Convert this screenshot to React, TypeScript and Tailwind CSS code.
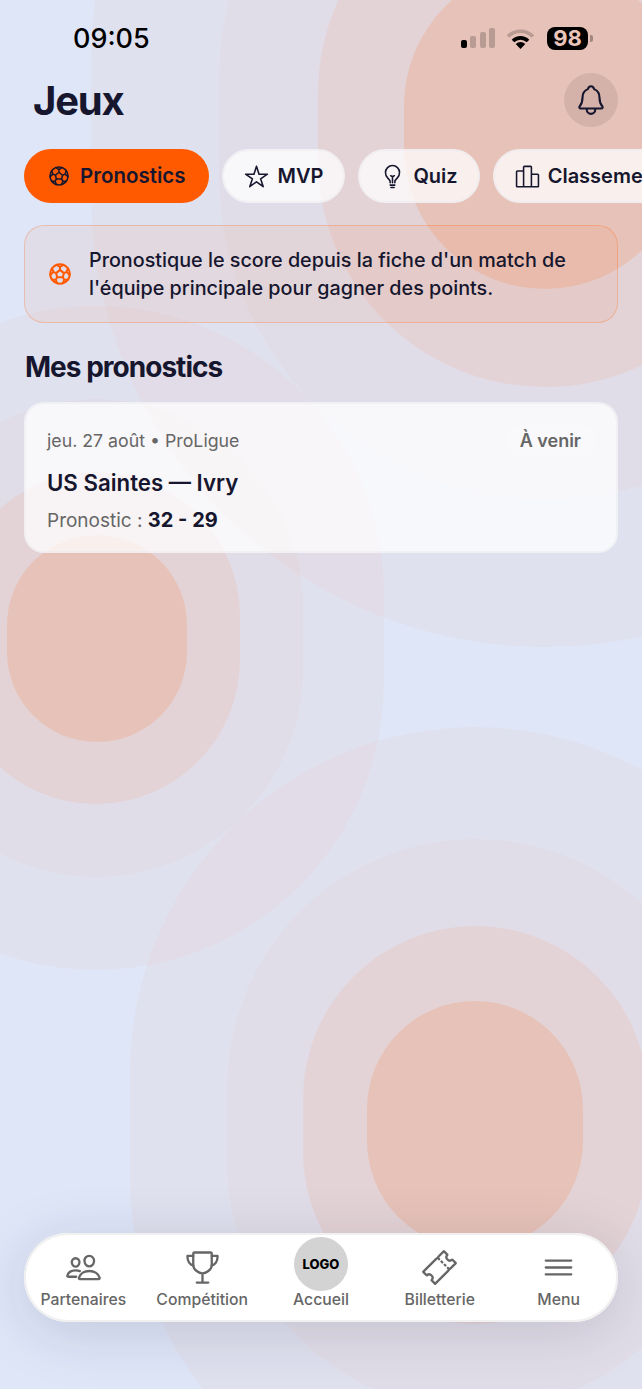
import {
  IoBulbOutline,
  IoFootballOutline,
  IoMenuOutline,
  IoNotificationsOutline,
  IoPeopleOutline,
  IoPodiumOutline,
  IoStarOutline,
  IoTicketOutline,
  IoTrophyOutline,
} from 'react-icons/io5';

// nested translucent pills behind the page
const SHAPES = [
  // top right
  'left-[91px] top-[-393px] h-[1040px] w-[908px] bg-[#ff5a00]/[0.035]',
  'left-[219px] top-[-247px] h-[747px] w-[652px] bg-[#ff5a00]/[0.03]',
  'left-[318px] top-[-133px] h-[520px] w-[454px] bg-[#ff5a00]/[0.08]',
  'left-[404px] top-[-35px] h-[324px] w-[282px] bg-[#ff5a00]/[0.14]',
  // left
  'left-[-192px] top-[306px] h-[664px] w-[576px] bg-[#ff5a00]/[0.035]',
  'left-[-111px] top-[399px] h-[478px] w-[414px] bg-[#ff5a00]/[0.03]',
  'left-[-48px] top-[472px] h-[332px] w-[288px] bg-[#ff5a00]/[0.08]',
  'left-[7px] top-[535px] h-[207px] w-[180px] bg-[#ff5a00]/[0.14]',
  // bottom right
  'left-[130px] top-[727px] h-[795px] w-[690px] bg-[#ff5a00]/[0.035]',
  'left-[227px] top-[839px] h-[572px] w-[497px] bg-[#ff5a00]/[0.03]',
  'left-[303px] top-[926px] h-[398px] w-[345px] bg-[#ff5a00]/[0.08]',
  'left-[367px] top-[1001px] h-[248px] w-[216px] bg-[#ff5a00]/[0.14]',
];

const CHIPS = [
  { label: 'MVP', icon: <IoStarOutline size={25} /> },
  { label: 'Quiz', icon: <IoBulbOutline size={25} /> },
  { label: 'Classement', icon: <IoPodiumOutline size={25} /> },
];

function StatusBar() {
  return (
    <div className="flex h-[73px] items-center justify-between pl-[73px] pr-[49px] pt-[3px] text-black">
      <span className="text-[27px] font-medium leading-none">09:05</span>
      <div className="flex items-center">
        <div className="flex items-end gap-[3.3px]">
          <div className="h-[8px] w-[6px] rounded-[2px] bg-black" />
          <div className="h-[12px] w-[6px] rounded-[2px] bg-black/20" />
          <div className="h-[16px] w-[6px] rounded-[2px] bg-black/20" />
          <div className="h-[20px] w-[6px] rounded-[2px] bg-black/20" />
        </div>
        <svg className="ml-[11px]" width="29" height="21" viewBox="0 0 29 21">
          <path d="M2 8.5a17.6 17.6 0 0 1 25 0" fill="none" stroke="#000" strokeOpacity="0.2" strokeWidth="3.6" />
          <path d="M7 13a10.6 10.6 0 0 1 15 0" fill="none" stroke="#000" strokeWidth="3.6" />
          <path d="M14.5 21L9.7 16a6.8 6.8 0 0 1 9.6 0z" fill="#000" />
        </svg>
        <div className="ml-[12px] flex h-[23px] w-[41px] items-center justify-center rounded-[8px] bg-black text-[22px] font-bold leading-none text-[#ebc5b9]">
          98
        </div>
        <div className="ml-[2px] h-[7px] w-[3px] rounded-r-[2px] bg-black/30" />
      </div>
    </div>
  );
}

function NavItem({ label, icon }: { label: string; icon: React.ReactNode }) {
  return (
    <div className="flex flex-1 flex-col items-center">
      <div className="flex h-[54px] items-center justify-center">{icon}</div>
      <span className="text-[15.75px] font-medium leading-[18px]">{label}</span>
    </div>
  );
}

export default function App() {
  return (
    <div className="relative h-[1389px] w-full overflow-hidden bg-[#dfe6f8] font-['Inter',sans-serif] text-[#16162e]">
      {SHAPES.map((s) => (
        <div key={s} className={`absolute rounded-full ${s}`} />
      ))}

      <div className="relative">
        <StatusBar />

        <div className="flex h-[54px] items-center justify-between pl-[33px] pr-[24px]">
          <h1 className="pt-[1px] text-[40px] font-bold leading-none tracking-[-0.03em]">Jeux</h1>
          <button className="flex h-[54px] w-[54px] items-center justify-center rounded-full bg-black/[0.08]">
            <IoNotificationsOutline size={34} />
          </button>
        </div>

        <div className="mt-[22px] flex gap-[13px] overflow-hidden pl-[24px]">
          <div className="flex h-[54px] shrink-0 items-center gap-[9px] rounded-full bg-[#ff5a00] pl-[23px] pr-[24px] text-[20.5px] font-semibold">
            <IoFootballOutline size={24} />
            Pronostics
          </div>
          {CHIPS.map((c) => (
            <div
              key={c.label}
              className="flex h-[54px] shrink-0 items-center gap-[8px] rounded-full border-2 border-[#e9e9ef]/50 bg-white/75 px-[20px] text-[20px] font-semibold"
            >
              {c.icon}
              {c.label}
            </div>
          ))}
        </div>

        <div className="mx-[24px] mt-[22px] flex h-[98px] items-center gap-[16px] rounded-[20px] border border-[#ff5a00]/25 bg-[#ff5a00]/[0.06] pl-[22px] pr-[20px]">
          <IoFootballOutline size={26} className="shrink-0 text-[#ff5a00] [&_*]:stroke-[40]" />
          <p className="text-[19.75px] font-medium leading-[28px]">
            Pronostique le score depuis la fiche d'un match de l'équipe principale pour gagner des points.
          </p>
        </div>

        <h2 className="ml-[25px] mt-[28px] text-[28px] font-bold leading-[32px] tracking-[-0.035em]">Mes pronostics</h2>

        <div className="mx-[24px] mt-[19px] h-[151px] rounded-[20px] border-2 border-[#e9e9ef]/50 bg-white/75 pl-[21px] pr-[21px] pt-[21px]">
          <div className="flex items-center justify-between">
            <span className="text-[17.75px] leading-[24px] text-[#666666]">jeu. 27 août • ProLigue</span>
            <span className="rounded-full bg-white/20 px-[14px] py-[4px] text-[18px] font-semibold leading-[24px] text-[#666666]">
              À venir
            </span>
          </div>
          <p className="mt-[12px] text-[22.25px] font-semibold leading-[28px]">US Saintes — Ivry</p>
          <p className="mt-[11px] text-[19px] leading-[24px] text-[#666666]">
            Pronostic : <span className="text-[20px] font-bold text-[#16162e]">32 - 29</span>
          </p>
        </div>
      </div>

      <div className="absolute bottom-[67px] left-[24px] right-[24px] flex h-[89px] items-start rounded-[44px] bg-white pt-[4px] text-[#666666] shadow-[0_10px_60px_rgba(30,30,60,0.15)] ring-2 ring-inset ring-[#f0f0f0]">
        <NavItem label="Partenaires" icon={<IoPeopleOutline size={37} className="mt-[6px]" />} />
        <NavItem label="Compétition" icon={<IoTrophyOutline size={37} className="mt-[6px]" />} />
        <NavItem
          label="Accueil"
          icon={
            <div className="flex h-[54px] w-[54px] items-center justify-center rounded-full bg-[#d3d3d3] pt-[2px] text-[13px] font-extrabold text-black">
              LOGO
            </div>
          }
        />
        <NavItem label="Billetterie" icon={<IoTicketOutline size={37} className="mt-[6px]" />} />
        <NavItem label="Menu" icon={<IoMenuOutline size={37} className="mt-[6px]" />} />
      </div>
    </div>
  );
}
